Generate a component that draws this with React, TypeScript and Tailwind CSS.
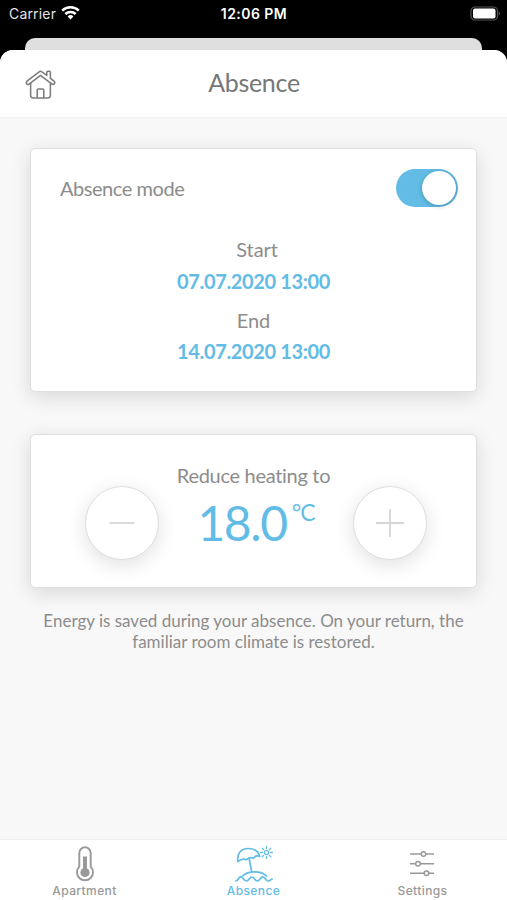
import { ReactNode, useState } from "react";

const HomeIcon = () => (
    <svg
        className="w-[31px] h-[31px] mt-px"
        viewBox="0 0 32 32"
        fill="none"
        stroke="#7c7c7c"
        strokeWidth="1.6"
        strokeLinejoin="round"
        strokeLinecap="round"
    >
        <path d="M17.4 2.9Q16 1.8 14.6 2.9L2 12.6Q.8 13.8 1.7 15.2T4.2 15.5L16 6.5l11.8 9q1.5.8 2.5-.3T30 12.6L26.2 9.6V3.4q0-1-1-1h-1.7q-1 0-1 1v3.3Z" />
        <path d="M5.8 15v12.2q0 2.8 2.8 2.8h14.8q2.8 0 2.8-2.8V15" />
        <path d="M12.6 29.5v-7.600q0-1.300 1.300-1.300h4.200q1.300 0 1.300 1.300v7.600" />
    </svg>
);

const ThermometerIcon = () => (
    <svg className="w-[18px] h-9" viewBox="0 0 18 36" fill="none" stroke="#999">
        <path
            d="M3.3 20.7V7a5.7 5.7 0 0 1 11.4 0v13.7a8 8 0 1 1-11.4 0Z"
            strokeWidth="1.9"
        />
        <path d="M9 10.5v16" strokeWidth="4" />
        <circle cx="9" cy="26.5" r="4.600" fill="#999" stroke="none" />
    </svg>
);

const BeachIcon = () => (
    <svg
        className="w-10 h-9"
        viewBox="0 0 40 36"
        fill="none"
        stroke="#62bce6"
        strokeWidth="1.7"
        strokeLinecap="round"
        strokeLinejoin="round"
    >
        <path d="M4 15.6C2.4 8 7 2.500 14 2.500c6 0 10.500 2.800 11.700 7.900-2.400-.9-4.900-.2-6.300 1.900-2.200-1.200-5-.6-6.900 1.400-2.800-1.100-6.100-.3-8.500 1.900Z" />
        <path d="m15.300 13 2.400 12.800" />
        <path d="M8.500 30c5.600-5.600 18.500-5.600 24 0" />
        <path d="M2 34.800c2.200 0 2.600-4.200 4.800-4.200s3 4.400 5.600 4.400 3-4 5.400-4 3 4 5.600 4 3-4.200 5.400-4.200 3.200 4.200 5.400 4.200 2.600-2 4-2" />
        <circle cx="32.500" cy="6.500" r="2.100" strokeWidth="1.300" />
        <path
            d="M32.500.6v1.800M32.500 10.600v1.800M26.600 6.500h1.800M36.600 6.500h1.800M28.300 2.300l1.300 1.300M35.400 9.400l1.300 1.300M28.300 10.700l1.300-1.300M35.400 3.600l1.300-1.300"
            strokeWidth="1.3"
        />
    </svg>
);

const SlidersIcon = () => (
    <svg
        className="w-6 h-[26px] -ml-px"
        viewBox="0 0 24 26"
        fill="white"
        stroke="#999"
        strokeWidth="1.5"
    >
        <path d="M0 3h24M0 12.700h24M0 22.300h24" />
        <circle cx="13.500" cy="3" r="2.300" />
        <circle cx="8" cy="12.700" r="2.300" />
        <circle cx="16.500" cy="22.300" r="2.300" />
    </svg>
);

const StatusBar = () => (
    <div className="h-[38px] shrink-0 flex justify-between pl-[9px] pr-[6px] pt-[5px] text-white font-['Inter',sans-serif] leading-[18px]">
        <div className="w-[120px] flex items-start">
            <span className="text-[14px] tracking-[0.17px] text-[#e4e4e4]">Carrier</span>
            <svg
                className="w-[19px] h-[15px] ml-[5px]"
                viewBox="0 0 19 15"
                fill="none"
                stroke="white"
                strokeWidth="2.5"
            >
                <path d="M1.2 5.600a12 12 0 0 1 16.600 0M4.300 9a7.500 7.500 0 0 1 10.400 0" />
                <path d="M6.600 11.500a4.200 4.200 0 0 1 5.800 0L9.500 14.600Z" fill="white" stroke="none" />
            </svg>
        </div>
        <span className="text-[14px] font-semibold tracking-[0.45px] pr-[2px]">12:06 PM</span>
        <div className="w-[120px] flex justify-end pt-px">
            <svg className="w-[31px] h-[15px]" viewBox="0 0 31 15">
                <rect x="1" y="1" width="26.5" height="13" rx="4" fill="none" stroke="#555" strokeWidth="1.2" />
                <rect x="3" y="2.5" width="22.5" height="10" rx="2" fill="white" />
                <path d="M28.8 5.3q2.2 2.2 0 4.4Z" fill="#666" />
            </svg>
        </div>
    </div>
);

const Card = ({ children, className }: { children: ReactNode; className: string }) => (
    <section
        className={`mx-[30px] bg-white rounded-[5px] border border-[#dedede] shadow-[0_5px_20px_rgba(0,0,0,0.13)] ${className}`}
    >
        {children}
    </section>
);

const RoundButton = ({ label, children, onClick }: { label: string; children: ReactNode; onClick: () => void }) => (
    <button
        aria-label={label}
        onClick={onClick}
        className="w-[74px] h-[74px] shrink-0 rounded-full bg-white border border-[#dedede] flex items-center justify-center shadow-[0_5px_20px_rgba(0,0,0,0.12)]"
    >
        <svg className="w-7 h-7" viewBox="0 0 28 28" stroke="#d6d6d6" strokeWidth="1.8">
            {children}
        </svg>
    </button>
);

const tabs = [
    { name: "Apartment", icon: <ThermometerIcon /> },
    { name: "Absence", icon: <BeachIcon /> },
    { name: "Settings", icon: <SlidersIcon /> },
];

export default function App() {
    const [enabled, setEnabled] = useState<boolean>(true);
    const [temperature, setTemperature] = useState<number>(18);

    return (
        <div className="w-[507px] h-[900px] flex flex-col overflow-hidden bg-black text-[#8c8c8c] font-['Lato',sans-serif]">
            <StatusBar />
            <div className="h-3 shrink-0 mx-[25px] bg-[#dfdfdf] rounded-t-[10px]" />

            <div className="flex-1 flex flex-col bg-[#f8f8f8] rounded-t-[13px] overflow-hidden">
                <header className="h-[68px] shrink-0 grid grid-cols-[1fr_auto_1fr] items-center bg-white border-b border-[#f3f3f3] pl-[25px]">
                    <HomeIcon />
                    <h1 className="text-[25px] leading-8 tracking-[-0.3px] text-[#777] pr-6 pb-[3px]">Absence</h1>
                </header>

                <main className="flex-1 pt-[30px]">
                    <Card className="h-[244px] pt-5">
                        <div className="flex justify-between items-center pl-[29px] pr-[18px]">
                            <span className="text-[20px] tracking-[-0.45px]">Absence mode</span>
                            <button
                                role="switch"
                                aria-checked={enabled}
                                onClick={() => setEnabled(!enabled)}
                                className={`w-[62px] h-[38px] p-[2px] flex items-center rounded-full ${
                                    enabled ? "justify-end bg-[#62bce6]" : "justify-start bg-gray-300"
                                }`}
                            >
                                <span className="w-[34px] h-[34px] rounded-full bg-white shadow-[0_1px_4px_rgba(0,0,0,0.25)]" />
                            </button>
                        </div>
                        <div className="mt-[27px] flex flex-col items-center text-[20px] leading-[31px]">
                            <p className="pl-[7px] tracking-[-0.1px]">Start</p>
                            <p className="pt-px font-bold tracking-[-0.37px] text-[#62bce6]">07.07.2020 13:00</p>
                            <p className="mt-2 tracking-[-0.1px]">End</p>
                            <p className="font-bold tracking-[-0.37px] text-[#62bce6]">14.07.2020 13:00</p>
                        </div>
                    </Card>

                    <Card className="h-[154px] mt-[42px] pt-[26px] pl-[54px] pr-[49px] flex justify-between">
                        <div className="pt-[25px]">
                            <RoundButton label="Decrease" onClick={() => setTemperature(temperature - 0.5)}>
                                <path d="M1.5 14h25" />
                            </RoundButton>
                        </div>
                        <div className="flex flex-col items-center whitespace-nowrap pr-[5px]">
                            <p className="text-[20px] leading-7 tracking-[-0.3px]">Reduce heating to</p>
                            <div className="flex items-start pl-[5px] mt-[4px] text-[#62bce6]">
                                <span className="text-[48px] leading-[60px] tracking-[-1.4px]">{temperature.toFixed(1)}</span>
                                <span className="text-[23px] leading-[30px] tracking-[-1px] ml-[5px] mt-[4px]">°C</span>
                            </div>
                        </div>
                        <div className="pt-[25px]">
                            <RoundButton label="Increase" onClick={() => setTemperature(temperature + 0.5)}>
                                <path d="M0 14h28M14 0v28" />
                            </RoundButton>
                        </div>
                    </Card>

                    <p className="mt-[23px] text-center text-[17px] leading-[20.5px]">
                        Energy is saved during your absence. On your return, the
                        <br />
                        familiar room climate is restored.
                    </p>
                </main>

                <nav className="h-[61px] shrink-0 grid grid-cols-3 bg-white border-t border-[#eee] font-['Inter',sans-serif]">
                    {tabs.map((tab) => (
                        <div key={tab.name} className="flex flex-col items-center pt-[6px]">
                            <div className="h-9 flex items-center">{tab.icon}</div>
                            <span
                                className={`text-[12px] leading-4 mt-px font-medium tracking-[0.4px] ${
                                    tab.name === "Absence" ? "text-[#62bce6]" : "text-[#999]"
                                }`}
                            >
                                {tab.name}
                            </span>
                        </div>
                    ))}
                </nav>
            </div>
        </div>
    );
}
